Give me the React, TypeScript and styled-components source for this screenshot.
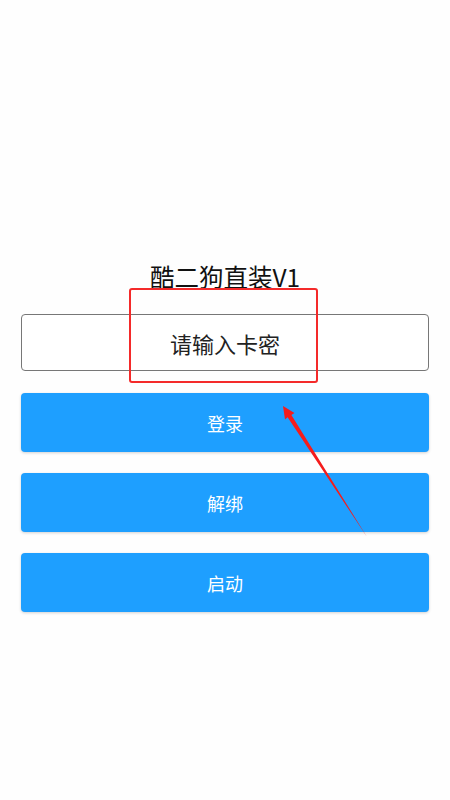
import React from 'react';
import styled, { createGlobalStyle } from 'styled-components';

const GlobalStyle = createGlobalStyle`
  html, body {
    margin: 0;
    padding: 0;
    background: #fefefe;
  }
  body {
    font-family: "Noto Sans CJK SC", "Noto Sans", sans-serif;
  }
`;

const Page = styled.div`
  position: relative;
  width: 450px;
  height: 800px;
  box-sizing: border-box;
  padding: 261px 21px 0;
  display: flex;
  flex-direction: column;
  align-items: stretch;
`;

const Title = styled.h1`
  margin: 0;
  font-size: 24.5px;
  font-weight: 400;
  line-height: 32px;
  color: #111;
  text-align: center;
`;

const CardInput = styled.input`
  margin-top: 21px;
  height: 57px;
  box-sizing: border-box;
  border: 1px solid #777;
  border-radius: 4px;
  background: #fff;
  font-family: inherit;
  font-size: 22px;
  color: #222;
  text-align: center;
  outline: none;
  &::placeholder {
    color: #222;
  }
`;

const Actions = styled.div`
  margin-top: 22px;
  display: flex;
  flex-direction: column;
  gap: 21px;
`;

const ActionButton = styled.button`
  height: 59px;
  border: none;
  border-radius: 4px;
  background: #1e9fff;
  color: #fff;
  font-family: inherit;
  font-size: 18px;
  box-shadow: 0 1px 3px rgba(0, 0, 0, 0.18);
  cursor: pointer;
`;

const Annotation = styled.svg`
  position: absolute;
  left: 0;
  top: 0;
  width: 450px;
  height: 800px;
  pointer-events: none;
`;

const App: React.FC = () => {
  return (
    <>
      <GlobalStyle />
      <Page>
        <Title>酷二狗直装V1</Title>
        <CardInput placeholder="请输入卡密" />
        <Actions>
          <ActionButton>登录</ActionButton>
          <ActionButton>解绑</ActionButton>
          <ActionButton>启动</ActionButton>
        </Actions>
        {/* screenshot markup: red box + arrow */}
        <Annotation viewBox="0 0 450 800">
          <rect x="130" y="289" width="187" height="93" rx="2" fill="none" stroke="#f42a2a" strokeWidth="2" />
          <polygon
            points="283,406 294.5,413 291.4,414.9 367,537 287.6,417.3 285,419.5"
            fill="#f51c1c"
          />
        </Annotation>
      </Page>
    </>
  );
};

export default App;
